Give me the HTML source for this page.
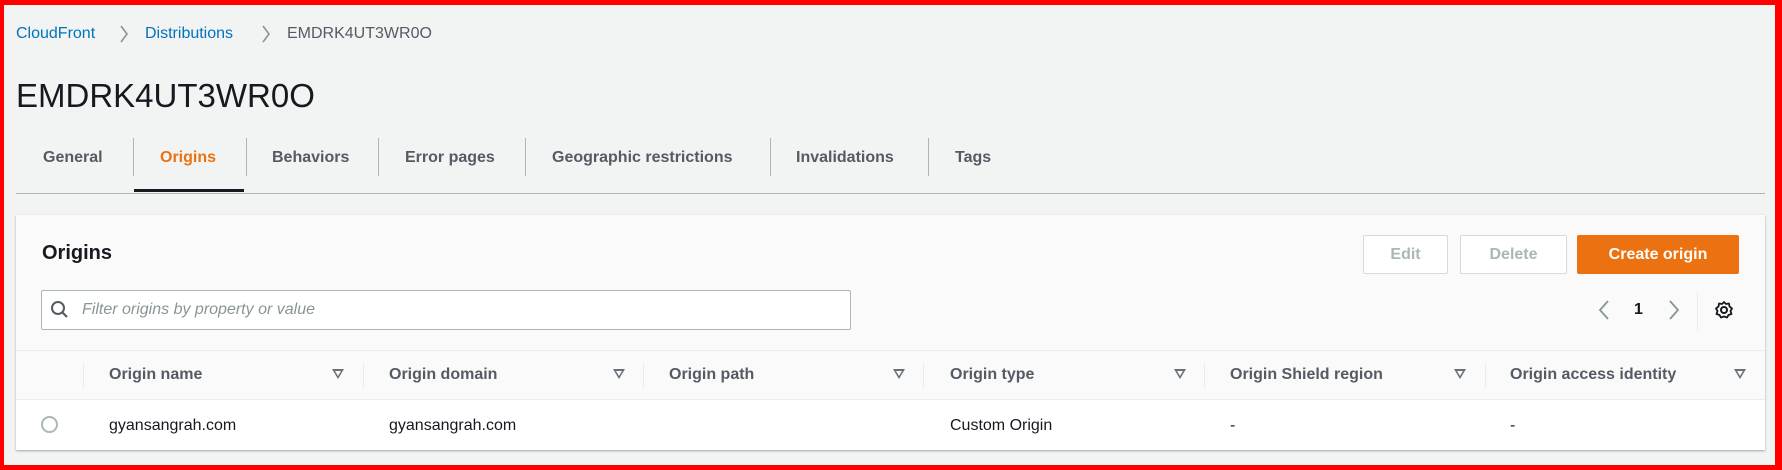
<!DOCTYPE html>
<html><head><meta charset="utf-8"><style>
*{box-sizing:border-box;margin:0;padding:0}
body{width:1782px;height:470px;overflow:hidden;background:#f2f3f3;font-family:"Liberation Sans",Arial,sans-serif;color:#16191f;position:relative}
.frame{position:absolute;left:0;top:0;width:1782px;height:470px;border:solid #f00;border-width:5px 7px 5px 4px;pointer-events:none;z-index:10}
.a{position:absolute;white-space:nowrap}
.bc{top:25px;font-size:16px;color:#0073bb}
.chev{color:#879596;font-size:18px}
.title{left:16px;top:77px;font-size:33px;color:#16191f}
.tab{top:149px;font-size:16px;font-weight:bold;color:#545b64}
.sep{position:absolute;top:138px;width:1px;height:38px;background:#aab7b8}
.card{position:absolute;left:16px;top:215px;width:1749px;height:235px;background:#fafafa;box-shadow:0 1px 2px rgba(0,28,36,.35);}
.btn{position:absolute;top:235px;height:39px;border:1px solid #d5dbdb;background:#fff;color:#aab7b8;font-weight:bold;font-size:16px;display:flex;align-items:center;justify-content:center;border-radius:2px}
.th{top:366px;font-size:16px;font-weight:bold;color:#545b64}
.td{top:417px;font-size:16px;color:#16191f}
.arr{position:absolute;top:369px;width:0;height:0;border-left:6px solid transparent;border-right:6px solid transparent;border-top:10px solid #687078}
.arr:after{content:"";position:absolute;left:-3px;top:-8px;border-left:3px solid transparent;border-right:3px solid transparent;border-top:5px solid #fafafa}
.vd{position:absolute;top:362px;width:1px;height:26px;background:#eaeded}
</style></head><body>
<div class="frame"></div>
<div class="a bc" style="left:16px">CloudFront</div>
<svg class="a" style="left:118px;top:24px" width="12" height="20"><path d="M3 2 L9 10 L3 18" fill="none" stroke="#879596" stroke-width="1.6"/></svg>
<div class="a bc" style="left:145px">Distributions</div>
<svg class="a" style="left:260px;top:24px" width="12" height="20"><path d="M3 2 L9 10 L3 18" fill="none" stroke="#879596" stroke-width="1.6"/></svg>
<div class="a bc" style="left:287px;color:#545b64">EMDRK4UT3WR0O</div>
<div class="a title">EMDRK4UT3WR0O</div>
<div class="a tab" style="left:43px">General</div>
<div class="sep" style="left:133px"></div>
<div class="a tab" style="left:160px;color:#ec7211">Origins</div>
<div class="sep" style="left:246px"></div>
<div class="a tab" style="left:272px">Behaviors</div>
<div class="sep" style="left:378px"></div>
<div class="a tab" style="left:405px">Error pages</div>
<div class="sep" style="left:525px"></div>
<div class="a tab" style="left:552px">Geographic restrictions</div>
<div class="sep" style="left:770px"></div>
<div class="a tab" style="left:796px">Invalidations</div>
<div class="sep" style="left:928px"></div>
<div class="a tab" style="left:955px">Tags</div>
<div style="position:absolute;left:134px;top:189px;width:110px;height:3px;background:#16191f"></div>
<div style="position:absolute;left:16px;top:193px;width:1749px;height:1px;background:#aab7b8"></div>
<div class="card">
  <div style="position:absolute;left:0;top:135px;width:100%;height:1px;background:#eaeded"></div>
  <div style="position:absolute;left:0;top:184px;width:100%;height:51px;background:#fff;border-top:1px solid #eaeded"></div>
</div>
<div class="a" style="left:42px;top:242px;font-size:20px;font-weight:bold">Origins</div>
<div style="position:absolute;left:41px;top:290px;width:810px;height:40px;background:#fff;border:1px solid #aab7b8;border-radius:2px"></div>
<svg class="a" style="left:50px;top:300px" width="20" height="20" viewBox="0 0 20 20"><circle cx="8" cy="8" r="6" fill="none" stroke="#545b64" stroke-width="2"/><path d="M12.5 12.5 L17 17" stroke="#545b64" stroke-width="2.2"/></svg>
<div class="a" style="left:82px;top:301px;font-size:16px;font-style:italic;color:#879596">Filter origins by property or value</div>
<div class="btn" style="left:1363px;width:85px">Edit</div>
<div class="btn" style="left:1460px;width:107px">Delete</div>
<div class="btn" style="left:1577px;width:162px;background:#ec7211;border-color:#ec7211;color:#fff">Create origin</div>
<svg class="a" style="left:1597px;top:299px" width="14" height="22"><path d="M11 2 L3 11 L11 20" fill="none" stroke="#879596" stroke-width="1.8"/></svg>
<div class="a" style="left:1634px;top:301px;font-size:16px;font-weight:bold">1</div>
<svg class="a" style="left:1667px;top:299px" width="14" height="22"><path d="M3 2 L11 11 L3 20" fill="none" stroke="#879596" stroke-width="1.8"/></svg>
<div style="position:absolute;left:1697px;top:292px;width:1px;height:38px;background:#eaeded"></div>
<svg class="a" style="left:1714px;top:300px" width="20" height="20" viewBox="0 0 20 20"><circle cx="10" cy="10" r="3" fill="none" stroke="#16191f" stroke-width="2"/><path d="M10 2 L12 4 L15 3.5 L15.5 6.5 L18 8.5 L16.5 11 L17.5 14 L14.5 15 L13 17.5 L10 16.5 L7 17.5 L5.5 15 L2.5 14 L3.5 11 L2 8.5 L4.5 6.5 L5 3.5 L8 4 Z" fill="none" stroke="#16191f" stroke-width="1.8" stroke-linejoin="round"/></svg>
<div class="vd" style="left:83px"></div>
<div class="vd" style="left:363px"></div>
<div class="vd" style="left:643px"></div>
<div class="vd" style="left:923px"></div>
<div class="vd" style="left:1204px"></div>
<div class="vd" style="left:1485px"></div>
<div class="a th" style="left:109px">Origin name</div><div class="arr" style="left:332px"></div>
<div class="a th" style="left:389px">Origin domain</div><div class="arr" style="left:613px"></div>
<div class="a th" style="left:669px">Origin path</div><div class="arr" style="left:893px"></div>
<div class="a th" style="left:950px">Origin type</div><div class="arr" style="left:1174px"></div>
<div class="a th" style="left:1230px">Origin Shield region</div><div class="arr" style="left:1454px"></div>
<div class="a th" style="left:1510px">Origin access identity</div><div class="arr" style="left:1734px"></div>
<div style="position:absolute;left:41px;top:416px;width:17px;height:17px;border:2px solid #aab7b8;border-radius:50%;background:#fff"></div>
<div class="a td" style="left:109px">gyansangrah.com</div>
<div class="a td" style="left:389px">gyansangrah.com</div>
<div class="a td" style="left:950px">Custom Origin</div>
<div class="a td" style="left:1230px">-</div>
<div class="a td" style="left:1510px">-</div>
</body></html>
